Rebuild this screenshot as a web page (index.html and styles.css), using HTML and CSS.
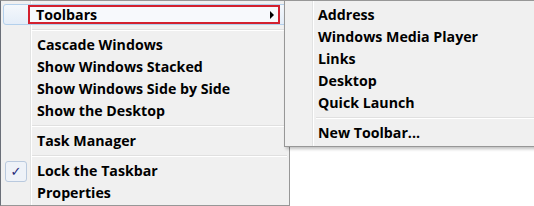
FILE: index.html
```html
<!DOCTYPE html>
<html>
<head>
<meta charset="utf-8">
<link rel="stylesheet" href="styles.css">
</head>
<body>
<div class="stage">
  <div class="menu main">
    <div class="item hover">
      <span class="gutter"></span>
      <span class="mark">
        <span class="label">Toolbars</span>
        <span class="arrow"></span>
      </span>
    </div>
    <div class="sep first"></div>
    <div class="item"><span class="gutter"></span><span class="label">Cascade Windows</span></div>
    <div class="item"><span class="gutter"></span><span class="label">Show Windows Stacked</span></div>
    <div class="item"><span class="gutter"></span><span class="label">Show Windows Side by Side</span></div>
    <div class="item"><span class="gutter"></span><span class="label">Show the Desktop</span></div>
    <div class="sep"></div>
    <div class="item"><span class="gutter"></span><span class="label">Task Manager</span></div>
    <div class="sep"></div>
    <div class="item"><span class="gutter"><span class="check">✓</span></span><span class="label">Lock the Taskbar</span></div>
    <div class="item"><span class="gutter"></span><span class="label">Properties</span></div>
  </div>
  <div class="menu sub">
    <div class="item"><span class="gutter"></span><span class="label">Address</span></div>
    <div class="item"><span class="gutter"></span><span class="label">Windows Media Player</span></div>
    <div class="item"><span class="gutter"></span><span class="label">Links</span></div>
    <div class="item"><span class="gutter"></span><span class="label">Desktop</span></div>
    <div class="item"><span class="gutter"></span><span class="label">Quick Launch</span></div>
    <div class="sep"></div>
    <div class="item"><span class="gutter"></span><span class="label">New Toolbar...</span></div>
  </div>
</div>
</body>
</html>
```
FILE: styles.css
```css
html, body {
  margin: 0;
  padding: 0;
  background: #ffffff;
}
.stage {
  position: relative;
  width: 534px;
  height: 206px;
  overflow: hidden;
  font-family: "Open Sans", "Liberation Sans", sans-serif;
  font-weight: 700;
  font-size: 14.2px;
  color: #000;
}
.menu {
  box-sizing: border-box;
  border: 1px solid #979797;
  background-color: #f0f0f0;
  display: flex;
  flex-direction: column;
  padding: 2px 2px;
}
.main {
  width: 290px;
  height: 206px;
  padding-bottom: 1px;
  border-left-color: #6a6f78;
  background-image: linear-gradient(to right, transparent 29px, #e2e3e3 29px, #e2e3e3 30px, #ffffff 30px, #ffffff 31px, transparent 31px);
}
.sub {
  position: absolute;
  left: 284px;
  top: 0;
  width: 270px;
  height: 147px;
  padding-top: 3px;
  box-shadow: 2px 2px 3px rgba(0,0,0,0.25);
  background-image: linear-gradient(to right, transparent 27px, #e2e3e3 27px, #e2e3e3 28px, #ffffff 28px, #ffffff 29px, transparent 29px);
}
.item {
  height: 22px;
  flex: none;
  display: flex;
  align-items: center;
  box-sizing: border-box;
}
.gutter {
  width: 26px;
  height: 22px;
  flex: none;
  display: flex;
  align-items: center;
  justify-content: center;
}
.main .label { padding-left: 8px; }
.sub .label { padding-left: 5px; }
.label {
  white-space: nowrap;
  line-height: 22px;
}
.hover {
  margin-top: 1px;
  height: 21px;
  border: 1px solid #b3d0ec;
  border-radius: 3px;
  background: linear-gradient(#f4f8fc, #e4edf8);
}
.hover .gutter {
  width: 24px;
  height: 19px;
}
.mark {
  flex: 1;
  height: 19px;
  box-sizing: border-box;
  border: 2px solid #d3202e;
  margin-right: 6px;
  display: flex;
  align-items: center;
  justify-content: space-between;
  background: #f7f9fc;
}
.mark .label {
  padding-left: 6px;
  line-height: 15px;
}
.arrow {
  width: 0;
  height: 0;
  border-top: 4px solid transparent;
  border-bottom: 4px solid transparent;
  border-left: 4px solid #000;
  margin-right: 4px;
}
.sep {
  height: 8px;
  flex: none;
  margin-left: 29px;
  background: linear-gradient(transparent 3px, #e0e0e0 3px, #e0e0e0 4px, #ffffff 4px, #ffffff 5px, transparent 5px);
}
.sep.first {
  height: 9px;
  background: linear-gradient(transparent 4px, #e0e0e0 4px, #e0e0e0 5px, #ffffff 5px, #ffffff 6px, transparent 6px);
}
.check {
  width: 22px;
  height: 21px;
  box-sizing: border-box;
  border: 1px solid #b9c9de;
  border-radius: 3px;
  background: #eef2f8;
  color: #1d2a7a;
  font-family: "DejaVu Sans", sans-serif;
  font-weight: 400;
  font-size: 13px;
  display: flex;
  align-items: center;
  justify-content: center;
}
```
